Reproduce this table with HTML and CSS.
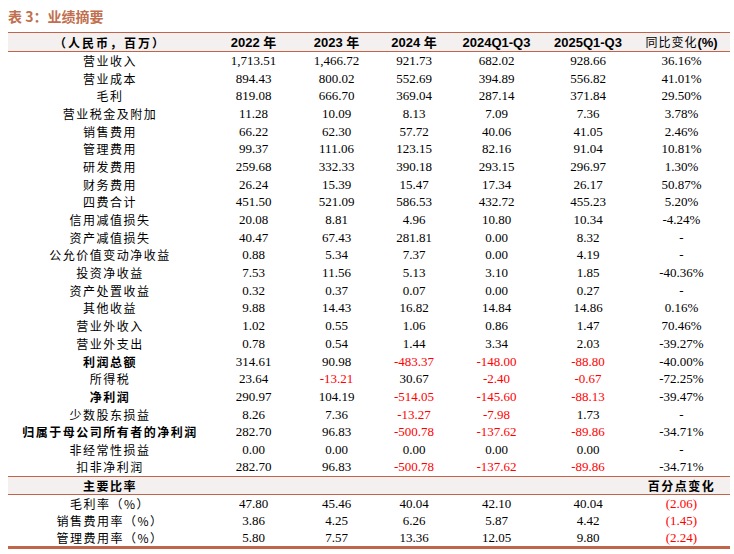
FILE: index.html
```html
<!DOCTYPE html>
<html lang="zh">
<head>
<meta charset="utf-8">
<link rel="stylesheet" href="styles.css">
</head>
<body>
<div class="page">
  <div class="title">表 3：业绩摘要</div>
  <table class="tbl">
    <colgroup>
      <col class="c-label"><col class="c1"><col class="c2"><col class="c3"><col class="c4"><col class="c5"><col class="c6">
    </colgroup>
    <thead>
      <tr class="head">
        <th class="lab-h">（人民币，百万）</th>
        <th>2022 年</th><th>2023 年</th><th>2024 年</th><th>2024Q1-Q3</th><th>2025Q1-Q3</th><th><span class="cn">同比变化</span>(%)</th>
      </tr>
    </thead>
    <tbody>
      <tr><td class="lab">营业收入</td><td>1,713.51</td><td>1,466.72</td><td>921.73</td><td>682.02</td><td>928.66</td><td>36.16%</td></tr>
      <tr><td class="lab">营业成本</td><td>894.43</td><td>800.02</td><td>552.69</td><td>394.89</td><td>556.82</td><td>41.01%</td></tr>
      <tr><td class="lab">毛利</td><td>819.08</td><td>666.70</td><td>369.04</td><td>287.14</td><td>371.84</td><td>29.50%</td></tr>
      <tr><td class="lab">营业税金及附加</td><td>11.28</td><td>10.09</td><td>8.13</td><td>7.09</td><td>7.36</td><td>3.78%</td></tr>
      <tr><td class="lab">销售费用</td><td>66.22</td><td>62.30</td><td>57.72</td><td>40.06</td><td>41.05</td><td>2.46%</td></tr>
      <tr><td class="lab">管理费用</td><td>99.37</td><td>111.06</td><td>123.15</td><td>82.16</td><td>91.04</td><td>10.81%</td></tr>
      <tr><td class="lab">研发费用</td><td>259.68</td><td>332.33</td><td>390.18</td><td>293.15</td><td>296.97</td><td>1.30%</td></tr>
      <tr><td class="lab">财务费用</td><td>26.24</td><td>15.39</td><td>15.47</td><td>17.34</td><td>26.17</td><td>50.87%</td></tr>
      <tr><td class="lab">四费合计</td><td>451.50</td><td>521.09</td><td>586.53</td><td>432.72</td><td>455.23</td><td>5.20%</td></tr>
      <tr><td class="lab">信用减值损失</td><td>20.08</td><td>8.81</td><td>4.96</td><td>10.80</td><td>10.34</td><td>-4.24%</td></tr>
      <tr><td class="lab">资产减值损失</td><td>40.47</td><td>67.43</td><td>281.81</td><td>0.00</td><td>8.32</td><td>-</td></tr>
      <tr><td class="lab">公允价值变动净收益</td><td>0.88</td><td>5.34</td><td>7.37</td><td>0.00</td><td>4.19</td><td>-</td></tr>
      <tr><td class="lab">投资净收益</td><td>7.53</td><td>11.56</td><td>5.13</td><td>3.10</td><td>1.85</td><td>-40.36%</td></tr>
      <tr><td class="lab">资产处置收益</td><td>0.32</td><td>0.37</td><td>0.07</td><td>0.00</td><td>0.27</td><td>-</td></tr>
      <tr><td class="lab">其他收益</td><td>9.88</td><td>14.43</td><td>16.82</td><td>14.84</td><td>14.86</td><td>0.16%</td></tr>
      <tr><td class="lab">营业外收入</td><td>1.02</td><td>0.55</td><td>1.06</td><td>0.86</td><td>1.47</td><td>70.46%</td></tr>
      <tr><td class="lab">营业外支出</td><td>0.78</td><td>0.54</td><td>1.44</td><td>3.34</td><td>2.03</td><td>-39.27%</td></tr>
      <tr><td class="lab bold">利润总额</td><td>314.61</td><td>90.98</td><td class="neg">-483.37</td><td class="neg">-148.00</td><td class="neg">-88.80</td><td>-40.00%</td></tr>
      <tr><td class="lab">所得税</td><td>23.64</td><td class="neg">-13.21</td><td>30.67</td><td class="neg">-2.40</td><td class="neg">-0.67</td><td>-72.25%</td></tr>
      <tr><td class="lab bold">净利润</td><td>290.97</td><td>104.19</td><td class="neg">-514.05</td><td class="neg">-145.60</td><td class="neg">-88.13</td><td>-39.47%</td></tr>
      <tr><td class="lab">少数股东损益</td><td>8.26</td><td>7.36</td><td class="neg">-13.27</td><td class="neg">-7.98</td><td>1.73</td><td>-</td></tr>
      <tr><td class="lab bold">归属于母公司所有者的净利润</td><td>282.70</td><td>96.83</td><td class="neg">-500.78</td><td class="neg">-137.62</td><td class="neg">-89.86</td><td>-34.71%</td></tr>
      <tr><td class="lab">非经常性损益</td><td>0.00</td><td>0.00</td><td>0.00</td><td>0.00</td><td>0.00</td><td>-</td></tr>
      <tr><td class="lab">扣非净利润</td><td>282.70</td><td>96.83</td><td class="neg">-500.78</td><td class="neg">-137.62</td><td class="neg">-89.86</td><td>-34.71%</td></tr>
      <tr class="sub"><td class="lab bold">主要比率</td><td></td><td></td><td></td><td></td><td></td><td class="lab bold">百分点变化</td></tr>
      <tr><td class="lab">毛利率（%）</td><td>47.80</td><td>45.46</td><td>40.04</td><td>42.10</td><td>40.04</td><td class="neg">(2.06)</td></tr>
      <tr><td class="lab">销售费用率（%）</td><td>3.86</td><td>4.25</td><td>6.26</td><td>5.87</td><td>4.42</td><td class="neg">(1.45)</td></tr>
      <tr class="last"><td class="lab">管理费用率（%）</td><td>5.80</td><td>7.57</td><td>13.36</td><td>12.05</td><td>9.80</td><td class="neg">(2.24)</td></tr>
    </tbody>
  </table>
</div>
</body>
</html>
```
FILE: styles.css
```css
* { box-sizing: border-box; }
html, body { margin: 0; padding: 0; background: #ffffff; }
.page {
  padding: 6px 4px 0 8px;
  font-family: "Liberation Serif", "Noto Sans CJK SC", serif;
  color: #000;
}
.title {
  font-family: "Noto Sans CJK SC", sans-serif;
  font-weight: 700;
  font-size: 14px;
  line-height: 20px;
  color: #c0704f;
  height: 26px;
}
.tbl {
  width: 722px;
  border-collapse: collapse;
  table-layout: fixed;
  font-size: 13px;
}
.c-label { width: 204px; }
.c1 { width: 83px; }
.c2 { width: 83px; }
.c3 { width: 72px; }
.c4 { width: 93px; }
.c5 { width: 90px; }
.c6 { width: 97px; }
.tbl th, .tbl td {
  padding: 0;
  text-align: center;
  white-space: nowrap;
  height: 17.7px;
  line-height: 17px;
}
.head th {
  height: 18px;
  background: #f4f0ef;
  border-top: 1.5px solid #c0654a;
  border-bottom: 1.5px solid #c0654a;
  font-family: "Liberation Sans", "Noto Sans CJK SC", sans-serif;
  font-weight: 700;
  font-size: 13px;
}
.head .cn {
  font-family: "Noto Sans CJK SC", sans-serif;
  font-weight: 400;
  font-size: 12px;
  letter-spacing: 1px;
}
.head .lab-h {
  font-family: "Noto Sans CJK SC", sans-serif;
  font-size: 12px;
  letter-spacing: 2px;
}
.lab {
  font-family: "Noto Sans CJK SC", sans-serif;
  font-size: 12px;
  letter-spacing: 1.5px;
  font-weight: 400;
}
.bold { font-weight: 700; }
.neg { color: #ff0000; }
.sub td {
  background: #f4f0ef;
  border-top: 1.5px solid #c0654a;
  border-bottom: 1.5px solid #c0654a;
}
.last td { border-bottom: 3px solid #c0654a; }
```
